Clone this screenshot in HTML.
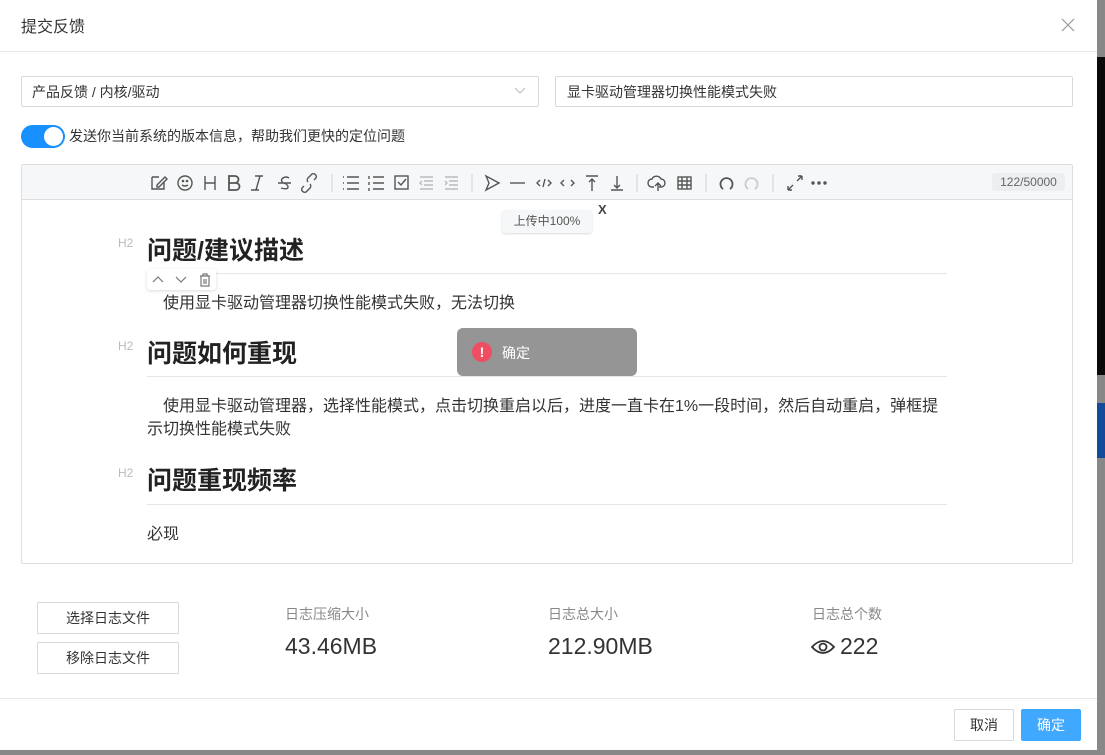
<!DOCTYPE html>
<html><head><meta charset="utf-8"><style>
*{box-sizing:border-box;margin:0;padding:0}
body{width:1105px;height:755px;overflow:hidden;background:#888;font-family:"Liberation Sans","Noto Sans CJK SC",sans-serif;color:#333;position:relative}
.a{position:absolute}
.dlg{left:0;top:0;width:1097px;height:750px;background:#fff}
.ic{stroke:#555;fill:none;stroke-width:1.4}
.t{font-size:14px;white-space:nowrap}
.p{font-size:16px;white-space:nowrap;color:#333}
h2{position:absolute;font-size:25px;font-weight:bold;color:#222;left:147px;white-space:nowrap;line-height:30px}
.hl{position:absolute;left:118px;font-size:12px;color:#bbb}
.ul{position:absolute;left:147px;width:800px;height:1px;background:#e6e6e6}
.btn{position:absolute;border:1px solid #d9d9d9;background:#fff;font-size:14px;text-align:center;border-radius:2px}
</style></head><body>
<div class="a" style="left:1097px;top:57px;width:8px;height:318px;background:#0a0a0a"></div>
<div class="a" style="left:1097px;top:403px;width:8px;height:55px;background:#134b9b"></div>
<div class="a dlg">
<div class="a t" style="left:21px;top:13px;font-size:16px;color:#333">提交反馈</div>
<svg class="a" style="left:1061px;top:18px" width="14" height="14"><path d="M1 1L13 13M13 1L1 13" stroke="#999" stroke-width="1.2"/></svg>
<div class="a" style="left:0;top:51px;width:1097px;height:1px;background:#e8e8e8"></div>

<div class="a" style="left:21px;top:76px;width:518px;height:31px;border:1px solid #d9d9d9;border-radius:2px"></div>
<div class="a t" style="left:32px;top:82px;color:#333">产品反馈 / 内核/驱动</div>
<svg class="a" style="left:514px;top:87px" width="12" height="8"><path d="M1 1L6 6L11 1" stroke="#bbb" fill="none"/></svg>
<div class="a" style="left:555px;top:76px;width:518px;height:31px;border:1px solid #d9d9d9;border-radius:2px"></div>
<div class="a t" style="left:567px;top:82px;color:#333">显卡驱动管理器切换性能模式失败</div>

<div class="a" style="left:21px;top:125px;width:44px;height:23px;border-radius:12px;background:#1890ff"></div>
<div class="a" style="left:44px;top:127px;width:19px;height:19px;border-radius:50%;background:#fff"></div>
<div class="a t" style="left:69px;top:126px;color:#333">发送你当前系统的版本信息，帮助我们更快的定位问题</div>

<div class="a" style="left:21px;top:164px;width:1052px;height:400px;border:1px solid #ddd;border-radius:2px"></div>
<div class="a" style="left:22px;top:165px;width:1050px;height:35px;background:#f6f7f8;border-bottom:1px solid #ddd"></div>
<svg class="a ic" style="left:148px;top:172px" width="690" height="22">
<path d="M4 5h7M4 5v12h12v-7M9 13l8-8 2 2-8 8h-2z"/>
<circle cx="37" cy="11" r="7"/><path d="M34 13q3 2 6 0"/><circle cx="35" cy="9" r=".6"/><circle cx="39" cy="9" r=".6"/>
<path d="M57 4v14M67 4v14M57 11h10"/>
<path d="M81 4h6a3.5 3.5 0 010 7h-6zM81 11h7a3.5 3.5 0 010 7h-7zM81 4v14" stroke-width="1.8"/>
<path d="M107 4h8M103 18h8M112 4l-4 14"/>
<path d="M130 11h13M141 6q-3-2-6 0t0 5q5 1 5 4t-7 1"/>
<path d="M156 14l-2 2a3 3 0 004 4l4-4a3 3 0 000-4M166 8l2-2a3 3 0 00-4-4l-4 4a3 3 0 000 4"/>
<path d="M184 2v18" stroke="#ddd"/>
<path d="M199 5h12M199 11h12M199 17h12M195 5h1M195 11h1M195 17h1"/>
<path d="M225 5h11M225 11h11M225 17h11M221 4v3M221 10v3M221 16v3"/>
<rect x="247" y="4" width="13" height="13"/><path d="M250 10l3 3 5-6"/>
<path d="M272 5h13M276 9h9M276 13h9M272 17h13M274 9l-2 2 2 2" stroke="#bbb"/>
<path d="M297 5h13M301 9h9M301 13h9M297 17h13M297 9l2 2-2 2" stroke="#bbb"/>
<path d="M324 2v18" stroke="#ddd"/>
<path d="M338 4l13 7-13 7 3-7z"/>
<path d="M362 11h15"/>
<path d="M392 8l-3 3 3 3M400 8l3 3-3 3M397 7l-2 8"/>
<path d="M416 8l-3 3 3 3M423 8l3 3-3 3"/>
<path d="M438 4h12M444 7v12M441 10l3-3 3 3"/>
<path d="M463 18h12M469 4v12M466 13l3 3 3-3"/>
<path d="M489 2v18" stroke="#ddd"/>
<path d="M506 15h-2a4 4 0 010-8 5 5 0 019 0 4 4 0 010 8h-2M510 19v-8M507 14l3-3 3 3"/>
<rect x="530" y="5" width="13" height="12"/><path d="M530 9h13M530 13h13M534 5v12M539 5v12"/>
<path d="M558 2v18" stroke="#ddd"/>
<path d="M575 17a6 6 0 117 0" stroke-width="1.8"/>
<path d="M600 17a6 6 0 117 0" stroke="#ccc" stroke-width="1.8"/>
<path d="M625 2v18" stroke="#ddd"/>
<path d="M640 18l5-5M649 9l5-5M640 18v-4M640 18h4M654 4h-4M654 4v4"/>
<circle cx="665" cy="11" r="1" fill="#555"/><circle cx="671" cy="11" r="1" fill="#555"/><circle cx="677" cy="11" r="1" fill="#555"/>
</svg>
<div class="a" style="left:992px;top:173px;width:73px;height:18px;background:#eceef0;border-radius:3px;font-size:12px;color:#666;text-align:center;line-height:18px">122/50000</div>
<div class="a" style="left:502px;top:210px;width:90px;height:23px;background:#f6f7f8;border-radius:3px;box-shadow:0 1px 2px rgba(0,0,0,.15);font-size:12px;color:#555;text-align:center;line-height:23px">上传中100%</div>
<div class="a" style="left:598px;top:202px;font-size:13px;font-weight:bold;color:#444">X</div>

<div class="hl" style="top:236px">H2</div><h2 style="top:236px">问题/建议描述</h2><div class="ul" style="top:273px"></div>
<div class="a" style="left:147px;top:269px;width:69px;height:21px;background:#fff;border-radius:3px;box-shadow:0 1px 3px rgba(0,0,0,.15)"></div>
<svg class="a" style="left:150px;top:272px" width="64" height="16" fill="none" stroke="#777" stroke-width="1.2"><path d="M3 10l5-5 5 5M26 5l5 5 5-5M50 4h10M53 4v-2h4v2M51 4v10h8V4M54 7v5M56 7v5"/></svg>
<div class="a p" style="left:163px;top:289px">使用显卡驱动管理器切换性能模式失败，无法切换</div>

<div class="hl" style="top:339px">H2</div><h2 style="top:339px">问题如何重现</h2><div class="ul" style="top:376px"></div>
<div class="a p" style="left:147px;top:392px">　使用显卡驱动管理器，选择性能模式，点击切换重启以后，进度一直卡在1%一段时间，然后自动重启，弹框提</div>
<div class="a p" style="left:147px;top:415px">示切换性能模式失败</div>

<div class="hl" style="top:466px">H2</div><h2 style="top:466px">问题重现频率</h2><div class="ul" style="top:504px"></div>
<div class="a p" style="left:147px;top:520px">必现</div>

<div class="a" style="left:457px;top:328px;width:180px;height:48px;background:#959595;border-radius:6px"></div>
<div class="a" style="left:472px;top:342px;width:20px;height:20px;border-radius:50%;background:#ef4d62;color:#fff;font-size:14px;font-weight:bold;text-align:center;line-height:20px">!</div>
<div class="a t" style="left:502px;top:343px;color:#fff">确定</div>

<div class="btn" style="left:37px;top:602px;width:142px;height:32px;line-height:30px">选择日志文件</div>
<div class="btn" style="left:37px;top:642px;width:142px;height:32px;line-height:30px">移除日志文件</div>
<div class="a t" style="left:285px;top:604px;color:#888">日志压缩大小</div>
<div class="a" style="left:285px;top:633px;font-size:23px;color:#333">43.46MB</div>
<div class="a t" style="left:548px;top:604px;color:#888">日志总大小</div>
<div class="a" style="left:548px;top:633px;font-size:23px;color:#333">212.90MB</div>
<div class="a t" style="left:812px;top:604px;color:#888">日志总个数</div>
<svg class="a" style="left:811px;top:638px" width="24" height="18" fill="none" stroke="#333" stroke-width="1.8"><path d="M1 9q11-12 22 0q-11 12-22 0z"/><circle cx="12" cy="9" r="3.5"/></svg>
<div class="a" style="left:840px;top:633px;font-size:23px;color:#333">222</div>

<div class="a" style="left:0;top:698px;width:1097px;height:1px;background:#e8e8e8"></div>
<div class="btn" style="left:954px;top:709px;width:60px;height:32px;line-height:30px">取消</div>
<div class="btn" style="left:1021px;top:709px;width:60px;height:32px;line-height:30px;background:#40a9ff;border-color:#40a9ff;color:#fff">确定</div>
</div>
</body></html>
